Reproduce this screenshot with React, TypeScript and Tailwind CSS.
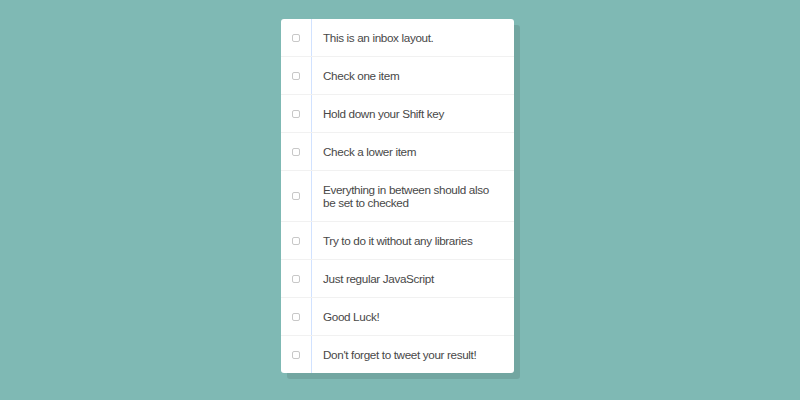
import React from "react";

const items: React.ReactNode[] = [
  "This is an inbox layout.",
  "Check one item",
  "Hold down your Shift key",
  "Check a lower item",
  <>
    Everything in between should also
    <br />
    be set to checked
  </>,
  "Try to do it without any libraries",
  "Just regular JavaScript",
  "Good Luck!",
  "Don't forget to tweet your result!",
];

export default function App() {
  return (
    <div className="w-[800px] h-[400px] bg-[#7fb9b4] flex justify-center pt-[19px] pr-[5px]">
      <div className="w-[233px] self-start bg-white rounded-[3px] shadow-[6px_6px_0_rgba(0,0,0,0.1)] overflow-hidden">
        {items.map((t, i) => (
          <div
            key={i}
            className={`flex items-center ${i < items.length - 1 ? "border-b border-[#f1f1f1]" : ""}`}
          >
            <div className="mx-[11px] w-[8px] h-[8px] shrink-0 rounded-[2px] border border-[#c8c8c8] bg-white" />
            <p
              className="flex-1 m-0 py-[12px] pl-[11px] pr-[6px] border-l border-[#d1e2ff] text-[11.7px] leading-[13px] tracking-[-0.35px] text-[#484848] whitespace-nowrap"
              style={{ fontFamily: '"Liberation Sans", Arial, sans-serif' }}
            >
              {t}
            </p>
          </div>
        ))}
      </div>
    </div>
  );
}
